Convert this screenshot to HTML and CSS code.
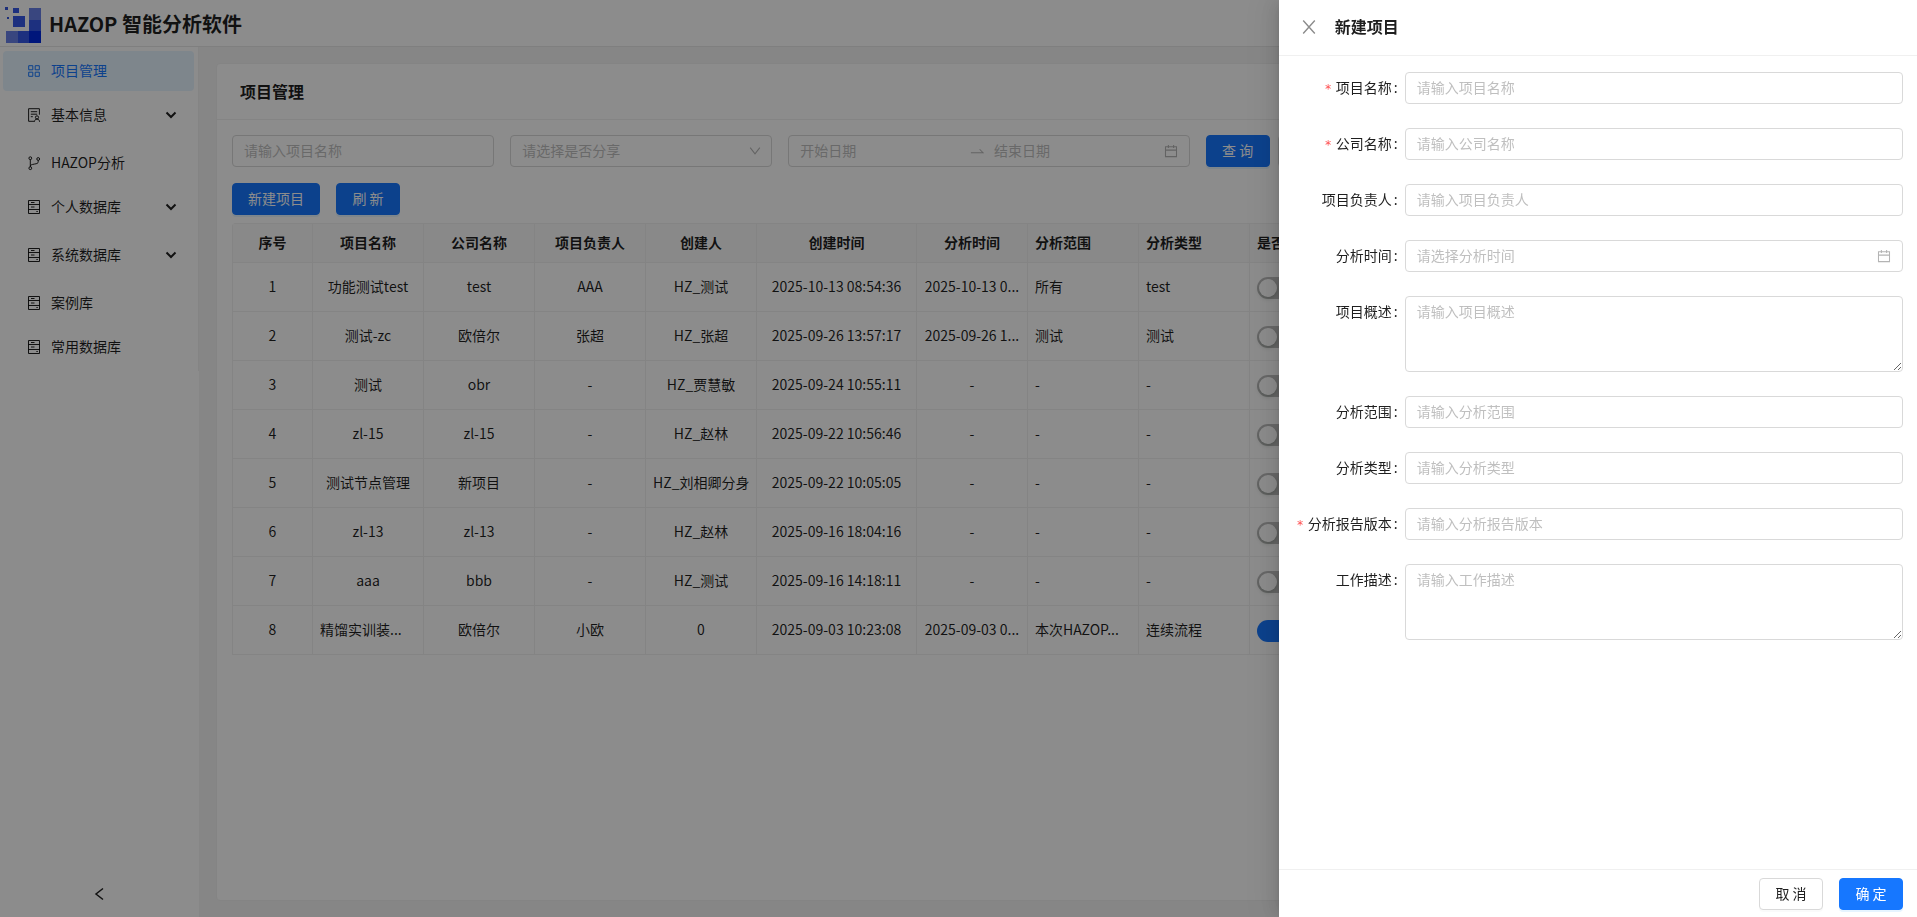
FILE: index.html
```html
<!DOCTYPE html>
<html lang="zh-CN">

<head>
    <meta charset="UTF-8">
    <meta name="viewport" content="width=device-width, initial-scale=1.0">
    <link rel="stylesheet" href="styles.css">
    <title>HAZOP 智能分析软件</title>
</head>

<body>

    <!-- shared icons -->
    <svg class="sprite" aria-hidden="true">
        <symbol id="icon-app" viewBox="0 0 16 16">
            <path d="M2.700 2.700h4.100v4.100H2.700zM9.200 2.700h4.100v4.100H9.200zM2.700 9.200h4.100v4.100H2.700zM9.200 9.200h4.100v4.100H9.200z" />
        </symbol>
        <symbol id="icon-audit" viewBox="0 0 16 16">
            <path d="M8 14.300H2.600V1.700h10.800v6M4.800 4.700h6.400M4.800 7.200h6.400M4.800 9.700h2" />
            <circle cx="11" cy="10.400" r="1.600" />
            <path d="M8.400 14.800c.2-1.800 1.100-2.700 2.600-2.700s2.400.9 2.600 2.700" />
        </symbol>
        <symbol id="icon-branch" viewBox="0 0 16 16">
            <circle cx="4.300" cy="3.200" r="1.400" />
            <circle cx="4.300" cy="13.200" r="1.400" />
            <circle cx="12.200" cy="4" r="1.400" />
            <path d="M4.300 4.600v7.200M12.200 5.400v1.400c0 1.500-1 1.800-3.900 2.300S4.300 10 4.300 11.500" />
        </symbol>
        <symbol id="icon-hdd" viewBox="0 0 16 16">
            <path d="M2.500 1.500h11v13h-11zM2.500 5.500h11M2.500 10.500h11M5 3.500h3.500M5 8h3.500M10.400 12.500h1.400" />
        </symbol>
        <symbol id="icon-down" viewBox="0 0 16 16">
            <path d="M2.500 4.200l5.500 7 5.500-7" />
        </symbol>
        <symbol id="icon-arrow" viewBox="0 0 14 14">
            <path d="M2.500 4.500l4.500 4.500 4.500-4.500" />
        </symbol>
        <symbol id="icon-calendar" viewBox="0 0 16 16">
            <path d="M1.700 3.200h12.600v11.200H1.700zM1.700 7h12.600M5 1v3.600M11 1v3.600" />
        </symbol>
        <symbol id="icon-close" viewBox="0 0 16 16">
            <path d="M2.200 1.500l11.600 13M13.800 1.500l-11.600 13" />
        </symbol>
    </svg>

    <header class="top-bar">
        <svg class="logo" viewBox="0 0 36 36" aria-hidden="true">
            <rect x="0" y="0" width="3" height="3" fill="#3355dd" />
            <rect x="2" y="10" width="2" height="2" fill="#3355dd" />
            <rect x="8" y="1" width="6" height="5" fill="#3558e8" />
            <rect x="8" y="9" width="12" height="11" fill="#3558e8" />
            <rect x="24" y="1" width="12" height="12" fill="#6880e8" />
            <rect x="24" y="13" width="12" height="11" fill="#3558e8" />
            <rect x="1" y="24" width="12" height="12" fill="#6880e8" />
            <rect x="13" y="24" width="11" height="12" fill="#3558e8" />
            <rect x="24" y="24" width="12" height="12" fill="#0028e0" />
        </svg>
        <h1 class="app-name">HAZOP 智能分析软件</h1>
    </header>

    <div class="layout">

        <nav class="sidebar">
            <ul class="menu">
                <li><a href="#" class="menu-item active"><svg class="icon"><use href="#icon-app" /></svg>项目管理</a></li>
                <li class="submenu"><a href="#" class="menu-item"><svg class="icon"><use href="#icon-audit" /></svg>基本信息<svg class="arrow"><use href="#icon-arrow" /></svg></a></li>
                <li><a href="#" class="menu-item"><svg class="icon"><use href="#icon-branch" /></svg>HAZOP分析</a></li>
                <li class="submenu"><a href="#" class="menu-item"><svg class="icon"><use href="#icon-hdd" /></svg>个人数据库<svg class="arrow"><use href="#icon-arrow" /></svg></a></li>
                <li class="submenu"><a href="#" class="menu-item"><svg class="icon"><use href="#icon-hdd" /></svg>系统数据库<svg class="arrow"><use href="#icon-arrow" /></svg></a></li>
                <li><a href="#" class="menu-item"><svg class="icon"><use href="#icon-hdd" /></svg>案例库</a></li>
                <li><a href="#" class="menu-item"><svg class="icon"><use href="#icon-hdd" /></svg>常用数据库</a></li>
            </ul>
            <button class="collapse" type="button" aria-label="收起菜单">
                <svg class="icon" viewBox="0 0 16 16"><path d="M11 2.500L4 8l7 5.500" /></svg>
            </button>
        </nav>

        <main class="content">
            <section class="card">
                <h2 class="card-title">项目管理</h2>

                <div class="card-body">
                    <form class="search">
                        <input class="control search-name" type="text" placeholder="请输入项目名称" aria-label="项目名称">
                        <div class="select-box">
                            <select class="control" aria-label="是否分享">
                                <option>请选择是否分享</option>
                            </select>
                            <svg class="hint"><use href="#icon-down" /></svg>
                        </div>
                        <div class="control picker range">
                            <input type="text" placeholder="开始日期" aria-label="开始日期">
                            <svg class="hint" viewBox="0 0 16 16"><path d="M1 10h14l-4-4" /></svg>
                            <input type="text" placeholder="结束日期" aria-label="结束日期">
                            <svg class="hint"><use href="#icon-calendar" /></svg>
                        </div>
                        <div class="search-buttons">
                            <button class="btn primary" type="button">查 询</button>
                            <button class="btn" type="button">重 置</button>
                        </div>
                    </form>

                    <div class="toolbar">
                        <button class="btn primary" type="button">新建项目</button>
                        <button class="btn primary" type="button">刷 新</button>
                    </div>

                    <table class="projects">
                        <colgroup>
                            <col class="col-index">
                            <col class="col-text" span="4">
                            <col class="col-time">
                            <col class="col-text" span="4">
                            <col>
                        </colgroup>
                        <thead>
                            <tr>
                                <th>序号</th>
                                <th>项目名称</th>
                                <th>公司名称</th>
                                <th>项目负责人</th>
                                <th>创建人</th>
                                <th>创建时间</th>
                                <th>分析时间</th>
                                <th class="left">分析范围</th>
                                <th class="left">分析类型</th>
                                <th class="left">是否分享</th>
                                <th>操作</th>
                            </tr>
                        </thead>
                        <tbody>
                            <tr>
                                <td>1</td>
                                <td>功能测试test</td>
                                <td>test</td>
                                <td>AAA</td>
                                <td>HZ_测试</td>
                                <td>2025-10-13 08:54:36</td>
                                <td>2025-10-13 0...</td>
                                <td class="left">所有</td>
                                <td class="left">test</td>
                                <td class="left"><input class="switch" type="checkbox" aria-label="是否分享"></td>
                                <td></td>
                            </tr>
                            <tr>
                                <td>2</td>
                                <td>测试-zc</td>
                                <td>欧倍尔</td>
                                <td>张超</td>
                                <td>HZ_张超</td>
                                <td>2025-09-26 13:57:17</td>
                                <td>2025-09-26 1...</td>
                                <td class="left">测试</td>
                                <td class="left">测试</td>
                                <td class="left"><input class="switch" type="checkbox" aria-label="是否分享"></td>
                                <td></td>
                            </tr>
                            <tr>
                                <td>3</td>
                                <td>测试</td>
                                <td>obr</td>
                                <td>-</td>
                                <td>HZ_贾慧敏</td>
                                <td>2025-09-24 10:55:11</td>
                                <td>-</td>
                                <td class="left">-</td>
                                <td class="left">-</td>
                                <td class="left"><input class="switch" type="checkbox" aria-label="是否分享"></td>
                                <td></td>
                            </tr>
                            <tr>
                                <td>4</td>
                                <td>zl-15</td>
                                <td>zl-15</td>
                                <td>-</td>
                                <td>HZ_赵林</td>
                                <td>2025-09-22 10:56:46</td>
                                <td>-</td>
                                <td class="left">-</td>
                                <td class="left">-</td>
                                <td class="left"><input class="switch" type="checkbox" aria-label="是否分享"></td>
                                <td></td>
                            </tr>
                            <tr>
                                <td>5</td>
                                <td>测试节点管理</td>
                                <td>新项目</td>
                                <td>-</td>
                                <td>HZ_刘相卿分身</td>
                                <td>2025-09-22 10:05:05</td>
                                <td>-</td>
                                <td class="left">-</td>
                                <td class="left">-</td>
                                <td class="left"><input class="switch" type="checkbox" aria-label="是否分享"></td>
                                <td></td>
                            </tr>
                            <tr>
                                <td>6</td>
                                <td>zl-13</td>
                                <td>zl-13</td>
                                <td>-</td>
                                <td>HZ_赵林</td>
                                <td>2025-09-16 18:04:16</td>
                                <td>-</td>
                                <td class="left">-</td>
                                <td class="left">-</td>
                                <td class="left"><input class="switch" type="checkbox" aria-label="是否分享"></td>
                                <td></td>
                            </tr>
                            <tr>
                                <td>7</td>
                                <td>aaa</td>
                                <td>bbb</td>
                                <td>-</td>
                                <td>HZ_测试</td>
                                <td>2025-09-16 14:18:11</td>
                                <td>-</td>
                                <td class="left">-</td>
                                <td class="left">-</td>
                                <td class="left"><input class="switch" type="checkbox" aria-label="是否分享"></td>
                                <td></td>
                            </tr>
                            <tr>
                                <td>8</td>
                                <td class="left">精馏实训装...</td>
                                <td>欧倍尔</td>
                                <td>小欧</td>
                                <td>0</td>
                                <td>2025-09-03 10:23:08</td>
                                <td>2025-09-03 0...</td>
                                <td class="left">本次HAZOP...</td>
                                <td class="left">连续流程</td>
                                <td class="left"><input class="switch" type="checkbox" aria-label="是否分享" checked></td>
                                <td></td>
                            </tr>
                        </tbody>
                    </table>
                </div>
            </section>
        </main>
    </div>

    <div class="mask"></div>

    <section class="drawer" role="dialog" aria-labelledby="drawer-title">
        <header class="drawer-header">
            <button class="close" type="button" aria-label="关闭"><svg class="icon"><use href="#icon-close" /></svg></button>
            <h2 class="drawer-title" id="drawer-title">新建项目</h2>
        </header>

        <form class="drawer-body">
            <div class="form-item">
                <label class="required" for="name">项目名称</label>
                <input class="control" id="name" type="text" placeholder="请输入项目名称">
            </div>
            <div class="form-item">
                <label class="required" for="company">公司名称</label>
                <input class="control" id="company" type="text" placeholder="请输入公司名称">
            </div>
            <div class="form-item">
                <label for="leader">项目负责人</label>
                <input class="control" id="leader" type="text" placeholder="请输入项目负责人">
            </div>
            <div class="form-item">
                <label for="time">分析时间</label>
                <div class="control picker">
                    <input id="time" type="text" placeholder="请选择分析时间">
                    <svg class="hint"><use href="#icon-calendar" /></svg>
                </div>
            </div>
            <div class="form-item">
                <label for="summary">项目概述</label>
                <textarea class="control" id="summary" placeholder="请输入项目概述"></textarea>
            </div>
            <div class="form-item">
                <label for="scope">分析范围</label>
                <input class="control" id="scope" type="text" placeholder="请输入分析范围">
            </div>
            <div class="form-item">
                <label for="type">分析类型</label>
                <input class="control" id="type" type="text" placeholder="请输入分析类型">
            </div>
            <div class="form-item">
                <label class="required" for="version">分析报告版本</label>
                <input class="control" id="version" type="text" placeholder="请输入分析报告版本">
            </div>
            <div class="form-item">
                <label for="work">工作描述</label>
                <textarea class="control" id="work" placeholder="请输入工作描述"></textarea>
            </div>
        </form>

        <footer class="drawer-footer">
            <button class="btn" type="button">取 消</button>
            <button class="btn primary" type="button">确 定</button>
        </footer>
    </section>

</body>

</html>
```
FILE: styles.css
```css
* {
    box-sizing: border-box;
}

body {
    margin: 0;
    height: 100vh;
    display: flex;
    flex-direction: column;
    overflow: hidden;
    font-family: "Noto Sans CJK SC", sans-serif;
    font-size: 14px;
    line-height: 22px;
    color: rgba(0, 0, 0, 0.88);
    background-color: #f5f5f5;
}

h1,
h2,
ul {
    margin: 0;
    padding: 0;
}

input,
select,
textarea,
button {
    font: inherit;
    color: inherit;
}

svg {
    flex: none;
    fill: none;
    stroke: currentColor;
}

.sprite {
    display: none;
}

.icon {
    width: 16px;
    height: 16px;
}

/* header */

.top-bar {
    display: flex;
    align-items: center;
    gap: 8px;
    height: 47px;
    padding: 4px 5px 0;
    background-color: #fff;
    border-bottom: 1px solid #e8e8e8;
}

.logo {
    width: 36px;
    height: 36px;
    stroke: none;
}

.app-name {
    font-size: 20px;
    line-height: 28px;
    padding-bottom: 2px;
}

.layout {
    flex: 1;
    display: flex;
    min-height: 0;
}

/* sidebar */

.sidebar {
    width: 199px;
    display: flex;
    flex-direction: column;
    justify-content: space-between;
    background-color: #fff;
}

.menu {
    display: flex;
    flex-direction: column;
    gap: 4px;
    padding: 4px 4px 4px 3px;
    list-style: none;
    border-right: 1px solid #f0f0f0;
}

.submenu {
    margin-bottom: 4px;
}

.menu-item {
    display: flex;
    align-items: center;
    gap: 9px;
    height: 40px;
    padding: 0 16px 2px 23px;
    border-radius: 4px;
    color: inherit;
    text-decoration: none;
}

.menu-item .icon,
.menu-item .arrow {
    margin-top: 2px;
}

.menu-item.active {
    background-color: #e6f4ff;
    color: #1677ff;
}

.arrow {
    width: 14px;
    height: 14px;
    margin-left: auto;
    stroke-width: 2;
}

.collapse {
    align-self: center;
    display: flex;
    margin-bottom: 7px;
    padding: 8px;
    border: 0;
    background: none;
    stroke-width: 1.5;
}

/* content */

.content {
    flex: 1;
    min-width: 0;
    display: flex;
    padding: 16px 16px 16px 17px;
}

.card {
    flex: 1;
    min-width: 0;
    background-color: #fff;
    border: 1px solid #f0f0f0;
    border-radius: 4px;
}

.card-title {
    height: 56px;
    padding: 0 23px;
    font-size: 16px;
    line-height: 54px;
    border-bottom: 1px solid #f0f0f0;
}

.card-body {
    padding: 15px;
}

.search {
    display: grid;
    grid-template-columns: repeat(24, 1fr);
    column-gap: 16px;
}

.search-name,
.select-box {
    grid-column: span 4;
}

.search-buttons {
    grid-column: span 10;
    display: flex;
    gap: 8px;
}

.toolbar {
    display: flex;
    gap: 16px;
    padding: 16px 0 8px;
}

/* controls */

.control {
    width: 100%;
    min-width: 0;
    height: 32px;
    padding: 3px 11px 5px;
    border: 1px solid #d9d9d9;
    border-radius: 4px;
    background-color: #fff;
    outline: none;
}

::placeholder {
    color: #bfbfbf;
}

textarea.control {
    display: block;
    height: 76px;
    resize: vertical;
}

.select-box {
    position: relative;
}

.select-box select {
    appearance: none;
    color: #bfbfbf;
}

.select-box .hint {
    position: absolute;
    top: 9px;
    right: 10px;
}

.hint {
    width: 14px;
    height: 14px;
    color: #b4b4b4;
    stroke-width: 1.2;
}

.picker {
    display: flex;
    align-items: center;
    gap: 8px;
}

.range {
    grid-column: span 6;
    gap: 10px;
}

.picker input {
    flex: 1;
    min-width: 0;
    padding: 0;
    border: 0;
    outline: none;
    background: none;
}

.picker .hint {
    margin-top: 2px;
}

.btn {
    min-width: 64px;
    height: 32px;
    padding: 0 15px 2px;
    border: 1px solid #d9d9d9;
    border-radius: 4px;
    background-color: #fff;
    box-shadow: 0 2px 0 rgba(0, 0, 0, 0.02);
    white-space: nowrap;
    cursor: pointer;
}

.btn.primary {
    border-color: #1677ff;
    background-color: #1677ff;
    box-shadow: 0 2px 0 rgba(5, 145, 255, 0.1);
    color: #fff;
}

.switch {
    appearance: none;
    display: block;
    width: 44px;
    height: 22px;
    margin: 4px 0 0;
    padding: 2px;
    border-radius: 11px;
    background-color: #bfbfbf;
}

.switch::before {
    content: "";
    display: block;
    width: 18px;
    height: 18px;
    border-radius: 9px;
    background-color: #fff;
    box-shadow: 0 2px 4px rgba(0, 35, 11, 0.2);
}

.switch:checked {
    background-color: #1677ff;
}

.switch:checked::before {
    margin-left: auto;
}

/* table */

.projects {
    width: 100%;
    table-layout: fixed;
    border-collapse: separate;
    border-spacing: 0;
    border-top: 1px solid #f0f0f0;
    border-left: 1px solid #f0f0f0;
    border-radius: 4px 4px 0 0;
}

.col-index {
    width: 80px;
}

.col-text {
    width: 111px;
}

.col-time {
    width: 160px;
}

.projects th,
.projects td {
    height: 49px;
    padding: 0 7px 2px;
    border-right: 1px solid #f0f0f0;
    border-bottom: 1px solid #f0f0f0;
    text-align: center;
    white-space: nowrap;
    overflow: hidden;
}

.projects th {
    height: 39px;
    background-color: #fafafa;
}

.projects .left {
    text-align: left;
}

/* drawer */

.mask {
    position: fixed;
    inset: 0;
    background-color: rgba(0, 0, 0, 0.45);
}

.drawer {
    position: fixed;
    top: 0;
    right: 0;
    bottom: 0;
    width: 33.3%;
    display: flex;
    flex-direction: column;
    background-color: #fff;
    box-shadow: -6px 0 16px rgba(0, 0, 0, 0.08), -3px 0 6px -4px rgba(0, 0, 0, 0.12), -9px 0 28px 8px rgba(0, 0, 0, 0.05);
}

.drawer-header {
    display: flex;
    align-items: center;
    gap: 18px;
    height: 56px;
    padding: 0 22px 1px;
    border-bottom: 1px solid #f0f0f0;
}

.drawer-title {
    font-size: 16px;
    line-height: 24px;
    padding-bottom: 2px;
}

.close {
    display: flex;
    padding: 0;
    border: 0;
    background: none;
    color: #8c8c8c;
    stroke-width: 1.4;
}

.drawer-body {
    flex: 1;
    display: flex;
    flex-direction: column;
    gap: 24px;
    padding: 16px 14px;
    overflow: auto;
}

.form-item {
    display: flex;
}

.form-item label {
    flex: none;
    width: 112px;
    padding-right: 7px;
    line-height: 30px;
    text-align: right;
    white-space: nowrap;
}

.form-item label::after {
    content: ":";
    margin-left: 2px;
}

.form-item .required::before {
    content: "*";
    margin-right: 4px;
    font-family: "DejaVu Sans Mono", monospace;
    font-size: 12px;
    line-height: 1;
    color: #ff4d4f;
}

.drawer-footer {
    display: flex;
    justify-content: flex-end;
    gap: 16px;
    padding: 8px 14px 7px;
    border-top: 1px solid #f0f0f0;
}
```
